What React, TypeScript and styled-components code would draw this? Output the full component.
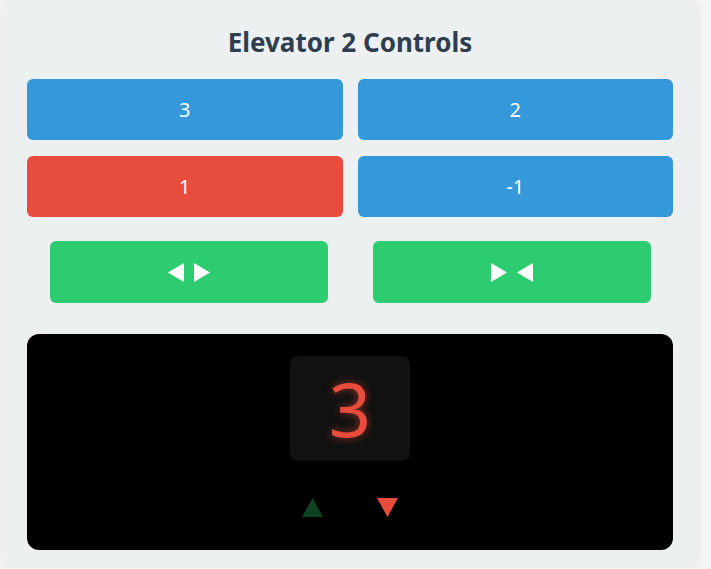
import React from 'react';
import styled, { createGlobalStyle } from 'styled-components';

const GlobalStyle = createGlobalStyle`
  html, body {
    margin: 0;
    padding: 0;
    background: #f4f5f5;
    font-family: "Noto Sans", "Open Sans", sans-serif;
  }
`;

const Card = styled.div`
  box-sizing: border-box;
  width: 694px;
  height: 568px;
  margin-left: 3px;
  padding: 27px 24px 18px;
  background: #ecf0f1;
  border-radius: 12px;
  box-shadow: 0 0 10px rgba(0, 0, 0, 0.08);
`;

const Title = styled.h2`
  margin: 0 0 21px;
  text-align: center;
  font-size: 26px;
  line-height: 31px;
  font-weight: 700;
  color: #2c3e50;
`;

const FloorGrid = styled.div`
  display: grid;
  grid-template-columns: 1fr 1fr;
  gap: 16px 15px;
`;

const FloorButton = styled.button<{ $active?: boolean }>`
  height: 61px;
  border: none;
  border-radius: 6px;
  background: ${(p) => (p.$active ? '#e74c3c' : '#3498db')};
  color: #fff;
  font-family: inherit;
  font-size: 20px;
  cursor: pointer;
`;

const DoorRow = styled.div`
  display: flex;
  justify-content: space-around;
  margin-top: 24px;
`;

const DoorButton = styled.button`
  width: 278px;
  height: 62px;
  border: none;
  border-radius: 6px;
  background: #2ecc71;
  display: flex;
  align-items: center;
  justify-content: center;
  gap: 10px;
  cursor: pointer;
`;

const Display = styled.div`
  margin-top: 31px;
  height: 216px;
  box-sizing: border-box;
  padding-top: 22px;
  background: #000;
  border-radius: 12px;
  display: flex;
  flex-direction: column;
  align-items: center;
`;

const FloorBox = styled.div`
  width: 120px;
  height: 105px;
  background: #111;
  border-radius: 8px;
  display: flex;
  align-items: center;
  justify-content: center;
  color: #e74c3c;
  font-size: 74px;
  line-height: 1;
  text-shadow: 0 0 8px rgba(231, 76, 60, 0.6);
`;

const Arrows = styled.div`
  display: flex;
  gap: 54px;
  margin-top: 37px;
`;

const Tri = ({ dir, color, w = 21, h = 19 }: { dir: 'up' | 'down' | 'left' | 'right'; color: string; w?: number; h?: number }) => {
  const pts = {
    up: `${w / 2},0 ${w},${h} 0,${h}`,
    down: `0,0 ${w},0 ${w / 2},${h}`,
    left: `0,${h / 2} ${w},0 ${w},${h}`,
    right: `0,0 ${w},${h / 2} 0,${h}`,
  }[dir];
  return (
    <svg width={w} height={h} viewBox={`0 0 ${w} ${h}`}>
      <polygon points={pts} fill={color} />
    </svg>
  );
};

export default function App() {
  return (
    <>
      <GlobalStyle />
      <Card>
        <Title>Elevator 2 Controls</Title>
        <FloorGrid>
          <FloorButton>3</FloorButton>
          <FloorButton>2</FloorButton>
          <FloorButton $active>1</FloorButton>
          <FloorButton>-1</FloorButton>
        </FloorGrid>
        <DoorRow>
          <DoorButton aria-label="open doors">
            <Tri dir="left" color="#fff" w={16} h={19} />
            <Tri dir="right" color="#fff" w={16} h={19} />
          </DoorButton>
          <DoorButton aria-label="close doors">
            <Tri dir="right" color="#fff" w={16} h={19} />
            <Tri dir="left" color="#fff" w={16} h={19} />
          </DoorButton>
        </DoorRow>
        <Display>
          <FloorBox>3</FloorBox>
          <Arrows>
            <Tri dir="up" color="#0f4223" />
            <Tri dir="down" color="#e74c3c" />
          </Arrows>
        </Display>
      </Card>
    </>
  );
}
